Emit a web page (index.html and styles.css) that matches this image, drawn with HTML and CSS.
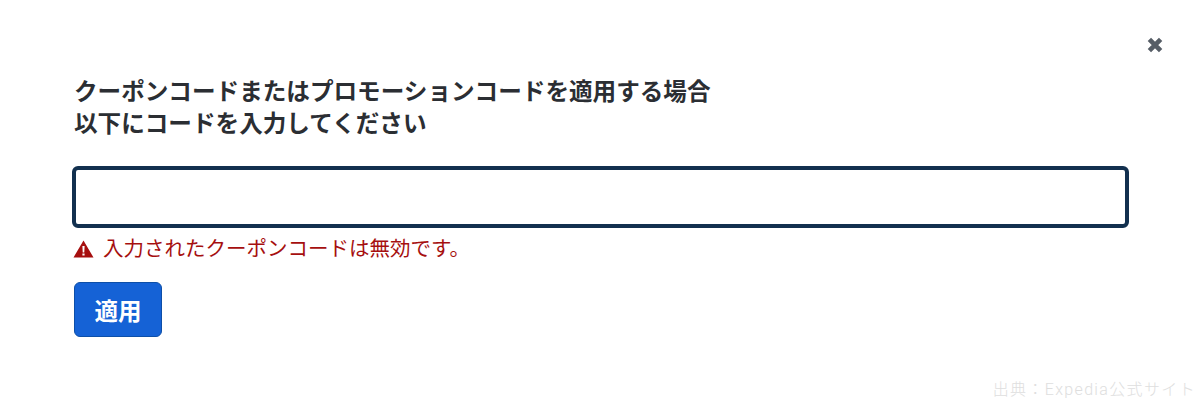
FILE: index.html
```html
<!DOCTYPE html>
<html lang="ja">
<head>
    <meta charset="UTF-8">
    <title>クーポンコード</title>
    <link rel="stylesheet" href="styles.css">
</head>
<body>
    <div class="dialog">
        <div class="close-row">
            <svg class="close-icon" viewBox="0 0 16 16" aria-hidden="true">
                <path d="M3 3 L13 13 M13 3 L3 13" stroke="#565d66" stroke-width="4.2" fill="none"/>
            </svg>
        </div>
        <h2 class="title">クーポンコードまたはプロモーションコードを適用する場合<br>以下にコードを入力してください</h2>
        <input type="text" class="code-input">
        <div class="error">
            <svg class="error-icon" viewBox="0 0 20 18" aria-hidden="true">
                <path fill-rule="evenodd" d="M10 0.5 L20 17.5 L0 17.5 Z M8.9 6 L9.2 12.4 L10.8 12.4 L11.1 6 Z M8.9 13.6 L8.9 15.6 L11.1 15.6 L11.1 13.6 Z" fill="#a60f0f"/>
            </svg>
            <span>入力されたクーポンコードは無効です。</span>
        </div>
        <button class="apply">適用</button>
    </div>
    <div class="credit">出典：Expedia公式サイト</div>
</body>
</html>
```

FILE: styles.css
```css
body {
    margin: 0;
    height: 400px;
    overflow: hidden;
    background-color: #fff;
    font-family: "Liberation Sans", "Noto Sans CJK JP", sans-serif;
    color: #2b2e33;
    position: relative;
}
.dialog {
    display: flex;
    flex-direction: column;
    align-items: flex-start;
    padding: 36px 71px 0 72px;
}
.close-row {
    align-self: flex-end;
    height: 40px;
    margin-right: -35px;
}
.close-icon {
    display: block;
    width: 18px;
    height: 18px;
}
.title {
    margin: 0 0 26px 2px;
    font-size: 23.6px;
    line-height: 32px;
    font-weight: 700;
    white-space: nowrap;
}
.code-input {
    width: 100%;
    height: 62px;
    box-sizing: border-box;
    border: 4px solid #12304f;
    border-radius: 6px;
    background-color: #fff;
}
.error {
    display: flex;
    align-items: center;
    gap: 9px;
    margin: 7px 0 0 1px;
    font-size: 20.5px;
    line-height: 28px;
    color: #a60f0f;
}
.error-icon {
    width: 21px;
    height: 18px;
}
.apply {
    margin: 19px 0 0 2px;
    width: 88px;
    height: 55px;
    padding: 0;
    border: 1px solid #0d4fa8;
    border-radius: 6px;
    background-color: #1562d6;
    color: #fff;
    font-family: inherit;
    font-size: 23.5px;
    font-weight: 700;
}
.credit {
    position: absolute;
    right: 4px;
    bottom: 0;
    font-family: Roboto, "Noto Sans CJK JP", sans-serif;
    font-size: 16px;
    letter-spacing: 1.35px;
    font-weight: 300;
    color: #dedede;
}
```
